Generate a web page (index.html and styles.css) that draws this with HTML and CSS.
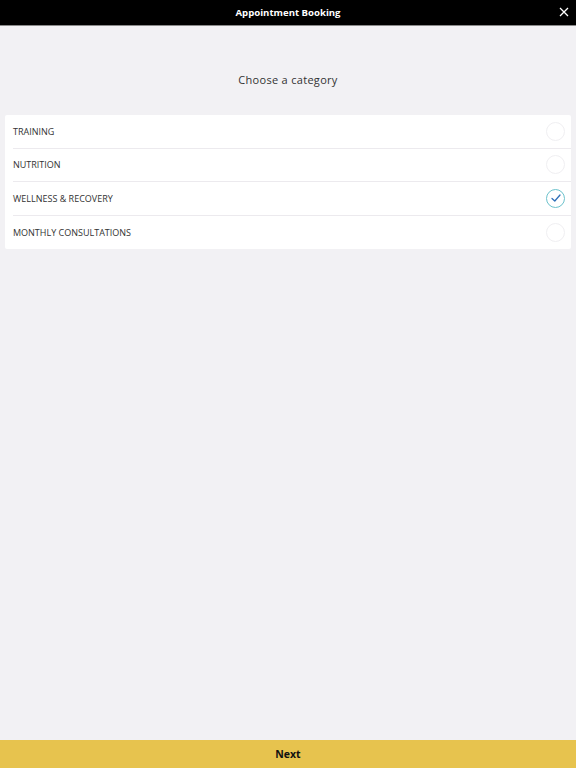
FILE: index.html
```html
<!DOCTYPE html>
<html>
<head>
<meta charset="utf-8">
<link rel="stylesheet" href="styles.css">
</head>
<body>
<div class="app">
  <header class="topbar">
    <span class="title">Appointment Booking</span>
    <button class="close" aria-label="Close">
      <svg width="10" height="10" viewBox="0 0 10 10"><path d="M1 1L9 9M9 1L1 9" stroke="#fff" stroke-width="1.3" fill="none"/></svg>
    </button>
  </header>
  <main class="content">
    <h1 class="heading">Choose a category</h1>
    <ul class="list">
      <li class="row"><span class="label">TRAINING</span><span class="radio"></span></li>
      <li class="row"><span class="label">NUTRITION</span><span class="radio"></span></li>
      <li class="row"><span class="label">WELLNESS &amp; RECOVERY</span><span class="radio checked"><svg width="12" height="12" viewBox="0 0 12 12"><path d="M2 6.5L4.8 9L10 3" stroke="#2f6fb8" stroke-width="1.3" fill="none" stroke-linecap="round" stroke-linejoin="round"/></svg></span></li>
      <li class="row"><span class="label">MONTHLY CONSULTATIONS</span><span class="radio"></span></li>
    </ul>
  </main>
  <footer class="footer">Next</footer>
</div>
</body>
</html>
```
FILE: styles.css
```css
* { box-sizing: border-box; }
html, body { margin: 0; padding: 0; }
body {
  font-family: "Open Sans", "DejaVu Sans", sans-serif;
  background: #f2f1f4;
  color: #333;
}
.app {
  display: flex;
  flex-direction: column;
  height: 768px;
}
.topbar {
  position: relative;
  height: 26px;
  background: #000;
  border-bottom: 1px solid #8a8a8a;
  display: flex;
  align-items: center;
  justify-content: center;
  flex: none;
}
.title {
  color: #fff;
  font-weight: 700;
  font-size: 9.6px;
  line-height: 1;
}
.close {
  position: absolute;
  right: 6px;
  top: 6px;
  width: 12px;
  height: 12px;
  padding: 0;
  border: 0;
  background: transparent;
  display: flex;
  align-items: center;
  justify-content: center;
}
.content {
  flex: 1;
  padding: 0 5px;
}
.heading {
  margin: 46px 0 0;
  height: 43px;
  text-align: center;
  font-weight: 400;
  font-size: 11px;
  letter-spacing: 0.3px;
  color: #333;
  line-height: 16px;
}
.list {
  list-style: none;
  margin: 0;
  padding: 0 0 0 8px;
  background: #fff;
  border-radius: 2px;
}
.row {
  height: 33.6px;
  display: flex;
  align-items: center;
  justify-content: space-between;
  padding-right: 6px;
  border-bottom: 1px solid #eceaee;
}
.row:last-child { border-bottom: 0; }
.label {
  font-size: 9px;
  color: #333;
  letter-spacing: 0;
}
.radio {
  width: 19px;
  height: 19px;
  border-radius: 50%;
  border: 1px solid #f0eff2;
  display: flex;
  align-items: center;
  justify-content: center;
}
.radio.checked {
  border: 1px solid #6cc2cc;
}
.footer {
  flex: none;
  height: 28px;
  background: #e7c34e;
  display: flex;
  align-items: center;
  justify-content: center;
  font-weight: 700;
  font-size: 10.5px;
  color: #111;
}
```
